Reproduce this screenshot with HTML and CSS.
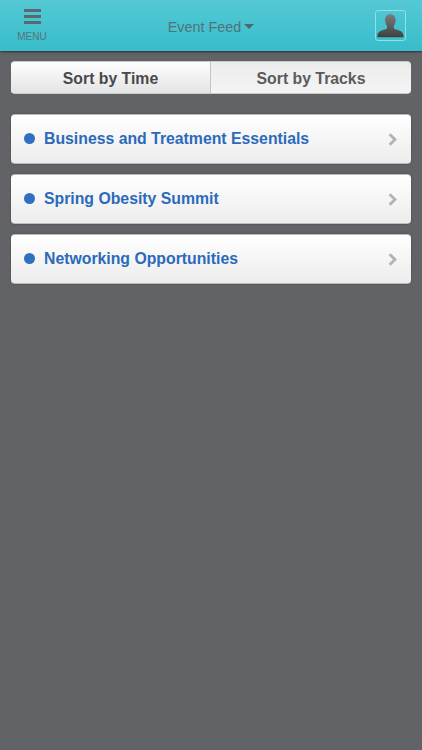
FILE: index.html
```
<!DOCTYPE html>
<html lang="en">
<head>
  <meta charset="utf-8">
  <meta name="viewport" content="width=device-width, initial-scale=1">
  <title>Event Feed</title>
  <link rel="stylesheet" href="styles.css">
</head>
<body>
  <header class="header">
    <a class="menu">
      <span class="bars"><i></i><i></i><i></i></span>
      <span class="menu-label">MENU</span>
    </a>
    <div class="title"><span class="title-text">Event Feed</span><span class="caret"></span></div>
    <a class="profile">
      <svg width="27" height="24" viewBox="0 0 27 24">
        <defs>
          <linearGradient id="person" x1="0" y1="0" x2="0" y2="1">
            <stop offset="0" stop-color="#7c7c7c"/>
            <stop offset="1" stop-color="#404040"/>
          </linearGradient>
        </defs>
        <path fill="url(#person)" d="M13.3 0.3C10 0.3 8 2.7 8.1 6C8.2 8.8 9.2 11 10 12V14.2C9.2 15.2 7.2 15.6 5.2 16.2C2 17.2 0.4 18.8 0.3 23.2H26.6C26.5 18.8 24.8 17.2 21.6 16.2C19.6 15.6 17.6 15.2 16.8 14.2V12C17.6 11 18.5 8.8 18.6 6C18.7 2.7 16.6 0.3 13.3 0.3Z"/>
      </svg>
    </a>
  </header>

  <main class="content">
    <div class="tabs">
      <a class="tab active"><span>Sort by Time</span></a>
      <a class="tab"><span>Sort by Tracks</span></a>
    </div>

    <div class="list">
      <a class="item">
        <span class="dot"></span>
        <span class="name">Business and Treatment Essentials</span>
        <svg class="arrow" width="9" height="13" viewBox="0 0 9 13"><path d="M1.6 1.2L7 6.5L1.6 11.8"/></svg>
      </a>
      <a class="item">
        <span class="dot"></span>
        <span class="name">Spring Obesity Summit</span>
        <svg class="arrow" width="9" height="13" viewBox="0 0 9 13"><path d="M1.6 1.2L7 6.5L1.6 11.8"/></svg>
      </a>
      <a class="item">
        <span class="dot"></span>
        <span class="name">Networking Opportunities</span>
        <svg class="arrow" width="9" height="13" viewBox="0 0 9 13"><path d="M1.6 1.2L7 6.5L1.6 11.8"/></svg>
      </a>
    </div>
  </main>
</body>
</html>
```
FILE: styles.css
```
* {
  box-sizing: border-box;
}
body {
  margin: 0;
  min-height: 100vh;
  background-color: #626367;
  font-family: "Liberation Sans", Arial, sans-serif;
}

.header {
  display: grid;
  grid-template-columns: 64px 1fr 64px;
  height: 51px;
  background: linear-gradient(#54c9d5, #38bdca);
  box-shadow: 0 1px 2px rgba(0, 0, 0, 0.55);
}
.menu {
  display: flex;
  flex-direction: column;
  align-items: center;
  padding-top: 9px;
  color: #55757b;
}
.bars {
  display: flex;
  flex-direction: column;
  gap: 3px;
}
.bars i {
  width: 17px;
  height: 3px;
  background-color: #566a6f;
}
.menu-label {
  margin-top: 7px;
  font-size: 10px;
  line-height: 11px;
}
.title {
  display: flex;
  justify-content: center;
  padding-top: 18px;
  font-size: 14.4px;
  line-height: 18px;
  color: #50727a;
}
.caret {
  width: 0;
  height: 0;
  margin: 6px 0 0 3px;
  border-left: 5px solid transparent;
  border-right: 5px solid transparent;
  border-top: 5px solid #50686d;
}
.profile {
  display: flex;
  justify-content: center;
  align-items: center;
  width: 31px;
  height: 31px;
  margin: 10px 0 0 17px;
  border: 1px solid #8fe0e8;
  border-radius: 3px;
}

.content {
  padding: 10px 11px 0;
}
.tabs {
  display: flex;
  height: 33px;
  border: 1px solid #c9c9ca;
  border-width: 1px 0;
  border-radius: 4px;
  overflow: hidden;
  background: linear-gradient(#ececed, #f4f4f4);
}
.tab {
  flex: 1;
  display: flex;
  justify-content: center;
  font-size: 15.8px;
  font-weight: bold;
  line-height: 33px;
  color: #5a5b5d;
}
.tab.active {
  flex: 0 0 200px;
  color: #48494b;
  background: linear-gradient(#fefefe, #e4e4e4);
  border-right: 1px solid #c4c4c5;
}

.list {
  display: flex;
  flex-direction: column;
  gap: 10px;
  padding-top: 20px;
}
.item {
  display: flex;
  align-items: center;
  height: 50px;
  padding: 0 14px 0 13px;
  border: 1px solid #bdbdbe;
  border-width: 1px 0;
  border-radius: 4px;
  background: linear-gradient(#ffffff, #ececec);
  box-shadow: 0 0 1px 1px rgba(70, 70, 73, 0.35);
}
.dot {
  width: 11px;
  height: 11px;
  margin-bottom: 1px;
  border-radius: 50%;
  background-color: #2f71c0;
}
.name {
  flex: 1;
  margin-left: 9px;
  font-size: 15.8px;
  font-weight: bold;
  line-height: 20px;
  color: #2b6abb;
}
.arrow {
  fill: none;
  stroke: #b3b3b3;
  stroke-width: 2.8;
}
```
